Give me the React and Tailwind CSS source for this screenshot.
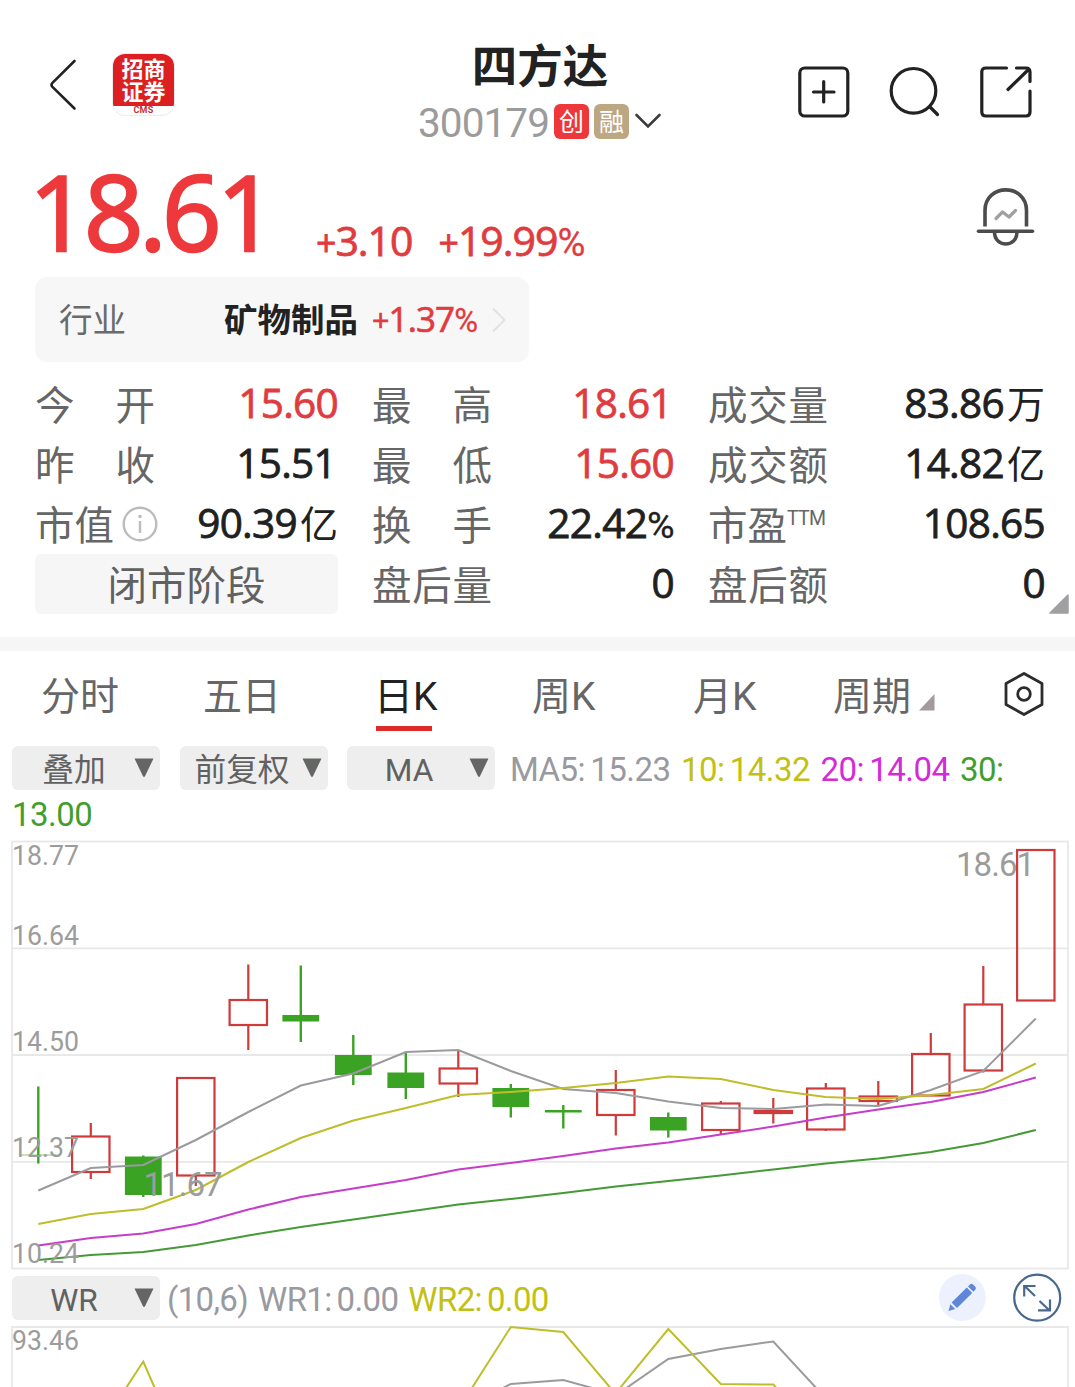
import React from "react";

const STEP = 52.5;
const FIRST_X = 38.3;

// direction, high, body top, body bottom, low
const candles = [
  ["down", 1086.5, 1154.7, 1155.3, 1163.5],
  ["up", 1123, 1136.5, 1172, 1179],
  ["down", 1155.5, 1156.5, 1195, 1197],
  ["up", 1078, 1078, 1175.5, 1186],
  ["up", 964.5, 1000, 1025, 1050],
  ["down", 965.5, 1015, 1021.5, 1042],
  ["down", 1035, 1055, 1075, 1085],
  ["down", 1052, 1072.5, 1088, 1099],
  ["up", 1051, 1068.5, 1083.5, 1097],
  ["down", 1084, 1088, 1107, 1117.5],
  ["down", 1105, 1110, 1112.5, 1128.5],
  ["up", 1070, 1090, 1115, 1135.5],
  ["down", 1112.5, 1117, 1130.5, 1137.5],
  ["up", 1101, 1103.5, 1130, 1135],
  ["up", 1098, 1111, 1113, 1123.5],
  ["up", 1083, 1088.5, 1129.5, 1131],
  ["up", 1081, 1096.5, 1101, 1105],
  ["up", 1033, 1054, 1095.5, 1096],
  ["up", 966, 1004.5, 1070.5, 1072.5],
  ["up", 850, 850, 1000.5, 1000.5],
];

const averages = [
  { color: "#9a9a9f", ys: [1190.5, 1168, 1165, 1140, 1112, 1085.5, 1073.5, 1052, 1050, 1071, 1089, 1093, 1101.5, 1108, 1109, 1104.5, 1106, 1090, 1071, 1018.5] },
  { color: "#bfbd2a", ys: [1224, 1214, 1209, 1190, 1162, 1138, 1120.5, 1108, 1095, 1092, 1088, 1083, 1076.5, 1079, 1090, 1097, 1099, 1095, 1089, 1063.5] },
  { color: "#c63ccb", ys: [1245.5, 1238, 1233.5, 1224, 1209.5, 1197, 1188.5, 1180, 1169.5, 1163, 1156, 1148.5, 1142.5, 1134.5, 1126.5, 1117.5, 1109.5, 1102, 1092, 1077.5] },
  { color: "#459a36", ys: [1260, 1255, 1252, 1245, 1235.5, 1227, 1219.5, 1212, 1204.5, 1199, 1193, 1186.5, 1181, 1175.5, 1169.5, 1163.5, 1158.5, 1152, 1143, 1130] },
];

const axisLabels = [
  { text: "18.77", y: 864.5 },
  { text: "16.64", y: 944.5 },
  { text: "14.50", y: 1050.5 },
  { text: "12.37", y: 1156.5 },
  { text: "10.24", y: 1262.5 },
];

const stats = [
  [
    { label: ["今", "开"], value: "15.60", red: true },
    { label: ["最", "高"], value: "18.61", red: true },
    { label: ["成", "交", "量"], value: "83.86", unit: "万" },
  ],
  [
    { label: ["昨", "收"], value: "15.51" },
    { label: ["最", "低"], value: "15.60", red: true },
    { label: ["成", "交", "额"], value: "14.82", unit: "亿" },
  ],
  [
    { label: ["市值"], info: true, value: "90.39", unit: "亿" },
    { label: ["换", "手"], value: "22.42", percent: true },
    { label: ["市盈"], ttm: true, value: "108.65" },
  ],
  [
    { phase: "闭市阶段" },
    { label: ["盘", "后", "量"], value: "0" },
    { label: ["盘", "后", "额"], value: "0" },
  ],
];

const tabs = [
  { text: "分时", width: "w-[162px]" },
  { text: "五日", width: "w-[171px]" },
  { text: "日K", width: "w-[158px]", active: true },
  { text: "周K", width: "w-[161px]" },
  { text: "月K", width: "w-[140px]" },
  { text: "周期", width: "w-[169px]", corner: true },
];

const xAt = (index) => FIRST_X + index * STEP;

const toPoints = (ys) => ys.map((y, i) => `${xAt(i)},${y}`).join(" ");

const Candle = ({ index, data }) => {
  const [direction, high, top, bottom, low] = data;
  const x = xAt(index);
  if (direction === "down") {
    return (
      <g fill="#3aa324">
        <rect x={x - 1.2} y={high} width="2.4" height={low - high} />
        <rect x={x - 18.4} y={top} width="36.8" height={bottom - top} />
      </g>
    );
  }
  return (
    <g stroke="#cf3a3a" strokeWidth="2.2" fill="none">
      <path d={`M${x} ${high}V${top}M${x} ${bottom}V${low}`} />
      <rect x={x - 18.7} y={top} width="37.4" height={bottom - top} />
    </g>
  );
};

const Quote = ({ plus, percent, children }) => (
  <>
    {plus && <span className="text-[0.87em]">+</span>}
    {children}
    {percent && <span className="font-[Roboto] text-[0.93em] [-webkit-text-stroke:0.3px]">%</span>}
  </>
);

const StatCell = ({ cell }) => {
  if (cell.phase) {
    return (
      <div className="h-[60px] rounded-md bg-[#f6f6f7] flex items-center justify-center pt-[5px] text-[39.5px] text-[#616161]">
        {cell.phase}
      </div>
    );
  }
  return (
    <div className="h-[60px] flex items-center justify-between whitespace-nowrap">
      <div className="w-[120px] flex items-center justify-between text-[39.5px] text-[#666666]">
        {cell.label.map((part) => (
          <span key={part} className="pt-[5px]">
            {part}
          </span>
        ))}
        {cell.info && (
          <svg width="36" height="36" viewBox="0 0 36 36" fill="none" stroke="#bcbcbc" className="shrink-0 -mr-[3px]">
            <circle cx="18" cy="18" r="16.3" strokeWidth="2.4" />
            <path d="M18 15v12" strokeWidth="2.4" />
            <circle cx="18" cy="10.5" r="1.8" fill="#bcbcbc" stroke="none" />
          </svg>
        )}
        {cell.ttm && <span className="text-[19.5px] tracking-[-0.7px] -mt-[10px] mr-[4px]">TTM</span>}
      </div>
      <div
        className={
          cell.red
            ? "h-[60px] flex items-center font-['Open_Sans'] text-[40.5px] tracking-[-0.7px] text-[#e03c3f] [-webkit-text-stroke:0.8px]"
            : "h-[60px] flex items-center font-['Open_Sans'] text-[40.5px] tracking-[-0.7px] text-[#202020] [-webkit-text-stroke:0.8px]"
        }
      >
        <span className="pb-[2px]">
          <Quote percent={cell.percent}>{cell.value}</Quote>
        </span>
        {cell.value.endsWith("1") && <span className="w-[2px]" />}
        {cell.unit && (
          <span className="ml-[3px] pb-[5px] font-['Noto_Sans_CJK_SC'] text-[38px] leading-[54px] tracking-normal [-webkit-text-stroke:0px]">
            {cell.unit}
          </span>
        )}
      </div>
    </div>
  );
};

const Chip = ({ text }) => (
  <div className="w-[148px] h-[44px] shrink-0 rounded-md bg-[#eeeeee] flex items-center pl-[2px] pr-[6px]">
    <span className="flex-1 pt-[5px] text-center text-[31.7px] tracking-normal text-[#616161] whitespace-nowrap">{text}</span>
    <svg width="20" height="20" viewBox="0 0 20 20">
      <path d="M0.5 0.5H19.5L11 18.2Q10 19.6 9 18.2Z" fill="#646664" />
    </svg>
  </div>
);

const Header = () => (
  <header className="h-[150px] flex items-start">
    <div className="w-[358px] pt-[53px] pl-[48px] flex">
      <svg width="30" height="64" viewBox="0 0 30 64" fill="none" stroke="#222" strokeWidth="2.6" strokeLinecap="round" strokeLinejoin="round">
        <path d="M26.5 8L4.2 30.2Q2.8 32 4.2 33.6L26.5 55.5" />
      </svg>
      <div className="ml-[34px] w-[63px] h-[63px] rounded-[13px] border border-[#ececec] bg-white overflow-hidden flex flex-col">
        <div className="h-[52px] bg-[#dc2021] text-white text-[22px] leading-[23px] font-bold pt-[4px] text-center">
          招商
          <br />
          证券
        </div>
        <div className="text-[9px] leading-[9px] text-center font-bold text-[#c23434] tracking-[0.3px]">CMS</div>
      </div>
    </div>
    <div className="w-[364px] pt-[38px] flex flex-col items-center">
      <h1 className="text-[45.5px] leading-[60px] font-bold text-[#222222]">四方达</h1>
      <div className="h-[50px] flex items-center">
        <span className="text-[40.5px] tracking-[-0.9px] text-[#9b9b9b]">300179</span>
        <span className="ml-[5px] mb-[4px] w-[35px] h-[35px] rounded-md bg-[#ee373a] text-white text-[25px] leading-[38px] text-center">创</span>
        <span className="ml-[5px] mb-[4px] w-[35px] h-[35px] rounded-md bg-[#bda682] text-white text-[25px] leading-[38px] text-center">融</span>
        <svg width="28" height="18" viewBox="0 0 28 18" className="ml-[5px] mb-[4px]" fill="none" stroke="#3c3c3c" strokeWidth="2.6" strokeLinecap="round">
          <path d="M2.5 3L14 14.5L25.5 3" />
        </svg>
      </div>
    </div>
    <div className="pt-[64px] pl-[74px] flex">
      <svg width="238" height="56" viewBox="796 64 238 56" fill="none" stroke="#222222" strokeWidth="3.2" strokeLinecap="round" strokeLinejoin="round">
        <rect x="799.8" y="68" width="48" height="48" rx="5" />
        <path d="M813.5 92H834M823.7 81.5V102" />
        <circle cx="913.5" cy="90.8" r="22.3" />
        <path d="M930 107L937.5 114.5" />
        <path d="M1006.5 68H986Q981.8 68 981.8 72V112Q981.8 116 986 116H1026Q1030 116 1030 112V91" />
        <path d="M1016.5 68H1026Q1030 68 1030 72V81.5M1028.5 69.5L1008 89.5" />
      </svg>
    </div>
  </header>
);

const PriceRow = () => (
  <div className="h-[127px] flex items-start font-['Open_Sans'] text-[#ee393c] whitespace-nowrap">
    <div className="w-[280px] shrink-0 pl-[29px] text-[104px] leading-[122px] tracking-[-4.4px] [-webkit-text-stroke:2.4px]">18.61</div>
    <div className="w-[695px] shrink-0 pl-[36px] pt-[63px] text-[41px] leading-[54px] tracking-[-1px] text-[#e03c3f] [-webkit-text-stroke:0.8px]">
      <span>
        <Quote plus>3.10</Quote>
      </span>
      <span className="ml-[26px]">
        <Quote plus percent>19.99</Quote>
      </span>
    </div>
    <svg width="60" height="62" viewBox="975 186 60 62" className="mt-9 shrink-0" fill="none" stroke="#4b4c4b" strokeWidth="3.6">
      <path d="M985 226.5V210.5C985 183 1026.5 183 1026.5 210.5V226.5" />
      <path d="M978.5 231.3H1032.5" strokeLinecap="round" />
      <path d="M994.5 232C994.5 248 1017 248 1017 232" />
      <path d="M996 218.5L1002.5 212L1009 217L1015.5 210.5" stroke="#a0a0a0" strokeWidth="3.2" strokeLinecap="round" strokeLinejoin="round" />
    </svg>
  </div>
);

const IndustryCard = () => (
  <div className="ml-[35px] w-[494px] h-[85px] rounded-[12px] bg-[#f7f7f7] flex items-center pl-[24px] pr-[22px] whitespace-nowrap">
    <span className="w-[165px] pt-[4px] text-[33.5px] text-[#6a6a6a]">行业</span>
    <span className="pt-[4px] text-[33.5px] font-bold text-[#222222]">矿物制品</span>
    <span className="ml-[14px] pb-px font-['Open_Sans'] text-[35px] tracking-[-0.9px] text-[#e03c3f] [-webkit-text-stroke:0.7px]">
      <Quote plus percent>1.37</Quote>
    </span>
    <svg width="16" height="26" viewBox="0 0 16 26" className="ml-auto" fill="none" stroke="#e2e2e4" strokeWidth="2">
      <path d="M2 1.5L13.5 13L2 24.5" />
    </svg>
  </div>
);

const TabBar = () => (
  <nav className="h-[95px] pl-[41px] flex whitespace-nowrap">
    {tabs.map((tab) => (
      <div key={tab.text} className={tab.width}>
        <div
          className={
            tab.active
              ? "inline-flex h-[80px] flex-col text-[39px] text-[#222222]"
              : "inline-flex h-[80px] text-[39px] text-[#666666]"
          }
        >
          <span className="h-[75px] leading-[93px]">{tab.text}</span>
          {tab.active && <span className="w-[56px] h-[5px] ml-[2px] bg-[#dc2b29]" />}
          {tab.corner && (
            <svg width="16" height="17" viewBox="0 0 16 17" className="ml-2 mt-[43px]">
              <path d="M0 16.5L15.5 0V16.5Z" fill="#a39a9c" />
            </svg>
          )}
        </div>
      </div>
    ))}
    <svg width="44" height="46" viewBox="0 0 44 46" className="mt-5" fill="none" stroke="#2c2c2c" strokeWidth="2.8" strokeLinejoin="round">
      <path d="M22 2.5L40 12.5V33.5L22 43.5L4 33.5V12.5Z" />
      <circle cx="22" cy="23" r="6.3" />
    </svg>
  </nav>
);

const PriceChart = () => (
  <svg width="1075" height="440" viewBox="0 835 1075 440" className="block">
    <g fill="none" stroke="#e8e8e8" strokeWidth="1.8">
      <rect x="12" y="841.5" width="1056" height="427" />
      <path d="M12 948.3H1068M12 1055H1068M12 1161.8H1068" />
    </g>
    {candles.map((data, i) => (
      <Candle key={i} index={i} data={data} />
    ))}
    {averages.map((line) => (
      <polyline key={line.color} points={toPoints(line.ys)} fill="none" stroke={line.color} strokeWidth="2" />
    ))}
    <g fill="#9c9c9c" fontSize="27">
      {axisLabels.map((label) => (
        <text key={label.text} x="12" y={label.y} textLength="67" lengthAdjust="spacingAndGlyphs">
          {label.text}
        </text>
      ))}
    </g>
    <g fill="#9c9c9c" fontSize="33">
      <text x="956" y="875.5" textLength="79">18.61</text>
      <text x="143.5" y="1195.5" textLength="79">11.67</text>
    </g>
  </svg>
);

const WrChart = () => (
  <svg width="1075" height="66" viewBox="0 1321 1075 66" className="block">
    <path d="M12 1390V1327H1068V1390" fill="none" stroke="#e8e8e8" strokeWidth="1.8" />
    <g fill="none" strokeWidth="2">
      <path d="M497 1391L510.8 1384L563.3 1380L603 1391M622 1391L668.3 1359L720.8 1349L773.3 1341.5L819 1391" stroke="#9a9a9f" />
      <path d="M124 1391L143.3 1361.5L156 1391M470 1391L510.8 1327L563.3 1332L613 1391M617.5 1391L668.3 1329L720.8 1384L773.3 1384.5L779 1391" stroke="#bfbd2a" />
    </g>
    <text x="12" y="1349.5" fontSize="27" fill="#9c9c9c" textLength="67" lengthAdjust="spacingAndGlyphs">93.46</text>
  </svg>
);

const App = () => {
  return (
    <div className="w-[1075px] h-[1387px] overflow-hidden bg-white font-[Roboto,'Noto_Sans_CJK_SC',sans-serif]">
      <Header />
      <PriceRow />
      <IndustryCard />

      <div className="relative mt-3 pl-[35px]">
        {stats.map((row, i) => (
          <div key={i} className="grid grid-cols-[303px_302px_337px] gap-x-[34px]">
            {row.map((cell, j) => (
              <StatCell key={j} cell={cell} />
            ))}
          </div>
        ))}
        <svg width="20" height="20" viewBox="0 0 20 20" className="absolute right-[6px] bottom-0">
          <path d="M1 19L19 1V19Z" fill="#a0a0a3" stroke="#a0a0a3" strokeWidth="1.5" strokeLinejoin="round" />
        </svg>
      </div>

      <div className="mt-[23px] h-[14px] bg-[#f6f6f6]" />

      <TabBar />

      <div className="pl-3 h-[44px] flex items-center whitespace-nowrap text-[33px]">
        <Chip text="叠加" />
        <span className="w-5" />
        <Chip text="前复权" />
        <span className="w-[19px]" />
        <Chip text="MA" />
        <div className="ml-[15px] mt-1 flex gap-[10.5px] [word-spacing:-2.5px] tracking-[-0.52px]">
          <span className="text-[#999aa0]">MA5: 15.23</span>
          <span className="text-[#c2c013]">10: 14.32</span>
          <span className="text-[#d22bd8]">20: 14.04</span>
          <span className="text-[#429e2c]">30:</span>
        </div>
      </div>
      <div className="h-[45px] pl-3 text-[33px] leading-[50px] tracking-[-0.5px] text-[#429e2c]">13.00</div>

      <PriceChart />

      <div className="h-[46px] pl-3 flex items-center whitespace-nowrap text-[33px]">
        <Chip text="WR" />
        <div className="ml-[7px] mt-1 w-[771px] flex gap-[10px] [word-spacing:-2.5px] tracking-[-0.65px] text-[#999aa0]">
          <span>(10,6)</span>
          <span>WR1: 0.00</span>
          <span className="text-[#c2c013]">WR2: 0.00</span>
        </div>
        <svg width="124" height="50" viewBox="938 1273 124 50" fill="none">
          <circle cx="962.3" cy="1297.5" r="23.5" fill="#edf1fe" />
          <g fill="#5f86d8">
            <path d="M948.5 1311L950.3 1304.3L955.3 1309Z" />
            <path d="M951.6 1302.6L966.8 1287.6L972.2 1293L957 1308Z" />
            <path d="M968 1286.4L970.3 1284.2Q971.7 1283.2 973 1284.4L975.4 1286.8Q976.4 1288.2 975.4 1289.6L973.4 1291.8Z" />
          </g>
          <g stroke="#47698e" strokeWidth="2.2">
            <circle cx="1037.2" cy="1297.7" r="23" />
            <path d="M1035 1296L1024.8 1286.2M1024.2 1296.5V1286H1035.5M1039.5 1301L1049.5 1310.5M1050 1299.5V1310.3H1038" />
          </g>
        </svg>
      </div>

      <WrChart />
    </div>
  );
};

export default App;
